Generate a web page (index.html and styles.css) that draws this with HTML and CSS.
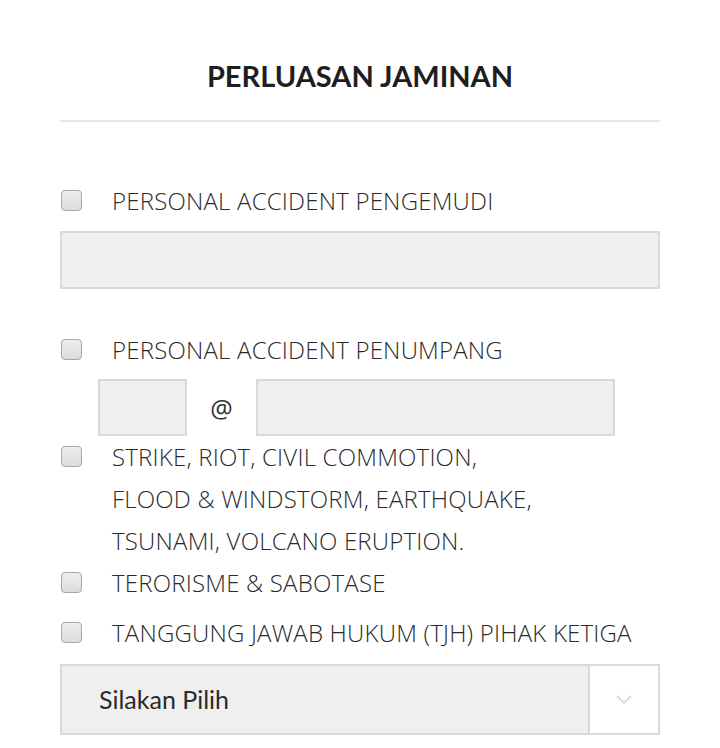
FILE: index.html
```html
<!DOCTYPE html>
<html lang="id">
<head>
    <meta charset="UTF-8">
    <meta name="viewport" content="width=device-width, initial-scale=1.0">
    <title>Perluasan Jaminan</title>
    <link rel="stylesheet" href="styles.css">
</head>
<body>
    <div class="container">
        <h2 class="title">PERLUASAN JAMINAN</h2>
        <hr class="divider">

        <div class="option first">
            <span class="check"></span>
            <label>PERSONAL ACCIDENT PENGEMUDI</label>
        </div>
        <div class="field wide"></div>

        <div class="option second">
            <span class="check"></span>
            <label>PERSONAL ACCIDENT PENUMPANG</label>
        </div>
        <div class="pax-row">
            <div class="field small"></div>
            <span class="at">@</span>
            <div class="field large"></div>
        </div>

        <div class="option">
            <span class="check"></span>
            <label>STRIKE, RIOT, CIVIL COMMOTION,<br>FLOOD &amp; WINDSTORM, EARTHQUAKE,<br>TSUNAMI, VOLCANO ERUPTION.</label>
        </div>
        <div class="option">
            <span class="check"></span>
            <label>TERORISME &amp; SABOTASE</label>
        </div>
        <div class="option tjh">
            <span class="check"></span>
            <label>TANGGUNG JAWAB HUKUM (TJH) PIHAK KETIGA</label>
        </div>

        <div class="select">
            <span class="select-text">Silakan Pilih</span>
            <span class="select-arrow">
                <svg width="16" height="10" viewBox="0 0 16 10"><path d="M1 1 L8 8 L15 1" fill="none" stroke="#cfcfcf" stroke-width="1.5"/></svg>
            </span>
        </div>
    </div>
</body>
</html>
```

FILE: styles.css
```css
body {
    margin: 0;
    background: #fff;
    font-family: "Open Sans", sans-serif;
    color: #2b2b2b;
}
.container {
    padding: 0 60px;
}
.title {
    margin: 0;
    padding-top: 58px;
    height: 36px;
    line-height: 36px;
    text-align: center;
    font-family: "Lato", sans-serif;
    font-weight: 700;
    font-size: 29px;
    color: #1e1e1e;
}
.divider {
    border: none;
    border-top: 2px solid #e6e6e6;
    margin: 26px 0 0;
}
.option {
    display: flex;
    align-items: flex-start;
}
.option.first {
    margin-top: 58px;
}
.option.second {
    margin-top: 40px;
}
.option.tjh {
    margin-top: 8px;
}
.check {
    flex: none;
    width: 19px;
    height: 19px;
    margin: 10px 30px 0 1px;
    border: 1px solid #a8a8a8;
    border-radius: 4px;
    background: linear-gradient(#eeeeee, #dcdcdc);
}
.option label {
    font-size: 24px;
    font-weight: 300;
    letter-spacing: 0.2px;
    line-height: 42px;
    color: #2a2a2a;
}
.field {
    box-sizing: border-box;
    background: #efefef;
    border: 2px solid #d9d9d9;
}
.field.wide {
    margin-top: 9px;
    height: 58px;
}
.pax-row {
    display: flex;
    align-items: center;
    margin-top: 8px;
    padding-left: 38px;
}
.field.small {
    width: 89px;
    height: 57px;
}
.field.large {
    width: 359px;
    height: 57px;
}
.at {
    width: 69px;
    text-align: center;
    font-size: 25px;
    color: #333;
}
.select {
    display: flex;
    box-sizing: border-box;
    margin-top: 10px;
    height: 71px;
    border: 2px solid #d9d9d9;
    background: #efefef;
}
.select-text {
    flex: 1;
    padding-left: 37px;
    line-height: 67px;
    font-family: "Lato", sans-serif;
    font-size: 25px;
    color: #2a2a2a;
}
.select-arrow {
    width: 68px;
    display: flex;
    align-items: center;
    justify-content: center;
    background: #fff;
    border-left: 2px solid #d9d9d9;
}
```
